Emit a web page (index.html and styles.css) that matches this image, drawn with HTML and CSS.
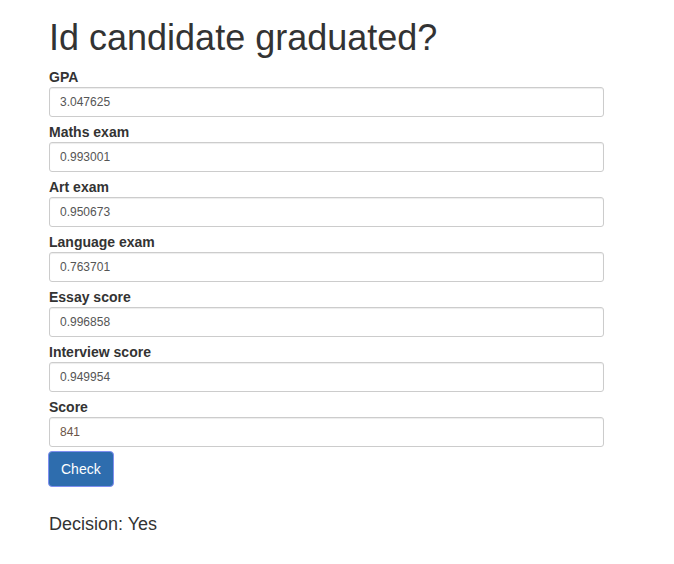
FILE: index.html
```html
<!DOCTYPE html>
<html>
<head>
<meta charset="utf-8">
<link rel="stylesheet" href="styles.css">
</head>
<body>
<div class="container">
  <h1 class="title">Id candidate graduated?</h1>
  <form class="form">
    <div class="group"><label class="lbl">GPA</label><input class="field" type="text" value="3.047625"></div>
    <div class="group"><label class="lbl">Maths exam</label><input class="field" type="text" value="0.993001"></div>
    <div class="group"><label class="lbl">Art exam</label><input class="field" type="text" value="0.950673"></div>
    <div class="group"><label class="lbl">Language exam</label><input class="field" type="text" value="0.763701"></div>
    <div class="group"><label class="lbl">Essay score</label><input class="field" type="text" value="0.996858"></div>
    <div class="group"><label class="lbl">Interview score</label><input class="field" type="text" value="0.949954"></div>
    <div class="group"><label class="lbl">Score</label><input class="field field-score" type="text" value="841"></div>
    <button class="btn" type="button">Check</button>
  </form>
  <div class="decision">Decision: Yes</div>
</div>
</body>
</html>
```
FILE: styles.css
```css
* { box-sizing: border-box; }
html, body { margin: 0; padding: 0; background: #fff; }
body {
  font-family: "Liberation Sans", Arial, sans-serif;
  font-size: 14px;
  line-height: 20px;
  color: #333;
}
.container {
  width: 555px;
  margin-left: 49px;
}
.title {
  font-size: 36px;
  font-weight: 500;
  line-height: 40px;
  margin: 18px 0 4px;
  color: #333;
}
.form { display: flex; flex-direction: column; align-items: flex-start; }
.group { display: flex; flex-direction: column; width: 100%; }
.lbl {
  font-weight: bold;
  line-height: 20px;
  margin-top: 5px;
}
.field {
  display: block;
  width: 100%;
  height: 30px;
  padding: 5px 10px;
  font-family: "Liberation Sans", Arial, sans-serif;
  font-size: 12px;
  line-height: 18px;
  color: #555;
  background: #fff;
  border: 1px solid #ccc;
  border-radius: 3px;
  box-shadow: inset 0 1px 1px rgba(0,0,0,0.075);
  outline: none;
}
.field-score { color: #6b5548; }
.btn {
  margin-top: 4px;
  margin-left: -1px;
  height: 36px;
  padding: 6px 12px;
  font-family: "Liberation Sans", Arial, sans-serif;
  font-size: 14px;
  line-height: 20px;
  color: #fff;
  background: #2e6dae;
  border: 1px solid #7f8ff0;
  border-radius: 4px;
  cursor: pointer;
}
.decision {
  margin-top: 27px;
  font-size: 18px;
  line-height: 20px;
  color: #333;
}
```
